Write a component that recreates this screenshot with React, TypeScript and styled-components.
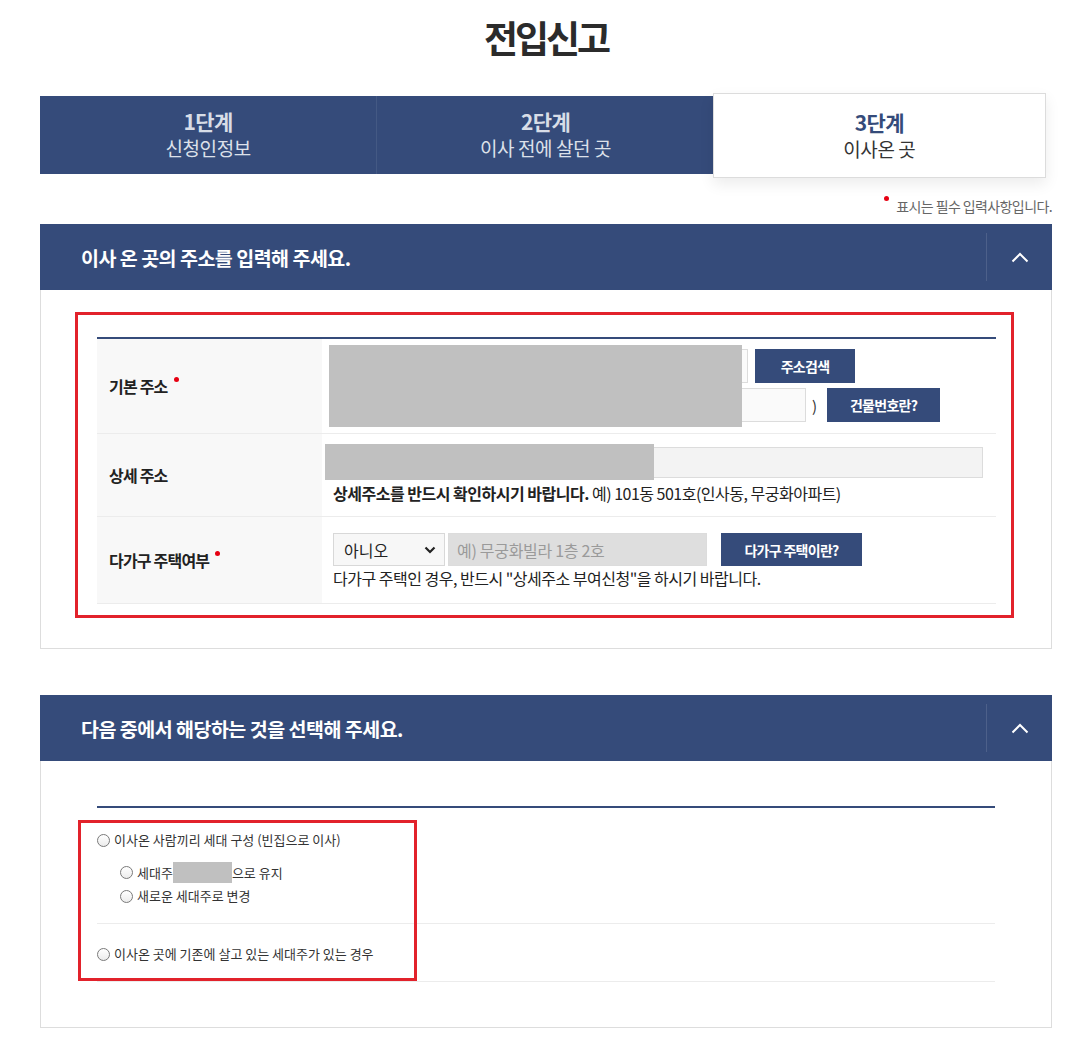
import React from "react";
import styled, { createGlobalStyle, css } from "styled-components";

const NAVY = "#354b7a";
const MARK_RED = "#e2222b";

const GlobalStyle = createGlobalStyle`
  * {
    box-sizing: border-box;
  }

  body {
    margin: 0;
    background: #fff;
    font-family: "Noto Sans CJK KR", "Noto Sans", sans-serif;
    color: #222;
  }
`;

const Page = styled.div`
  width: 1075px;
  padding: 0 23px 14px 40px;
`;

const Title = styled.h1`
  margin: 0 0 36px;
  padding-top: 14px;
  text-align: center;
  font-size: 37px;
  line-height: 46px;
  font-weight: 700;
  letter-spacing: -3px;
  color: #2b2b2b;
`;

const Steps = styled.div`
  display: grid;
  grid-template-columns: repeat(3, 1fr);
  height: 78px;
`;

const Step = styled.div<{ $active?: boolean }>`
  display: flex;
  flex-direction: column;
  align-items: center;
  justify-content: center;
  background: ${NAVY};
  border-right: 1px solid rgba(255, 255, 255, 0.08);

  ${(p) =>
    p.$active &&
    css`
      position: relative;
      z-index: 1;
      margin: -3px 6px -4px -2px;
      background: #fff;
      border: 1px solid #dcdcdc;
      box-shadow: 0 6px 14px rgba(0, 0, 0, 0.08);
    `}
`;

const StepNum = styled.div<{ $active?: boolean }>`
  font-size: 21px;
  line-height: 26px;
  font-weight: 700;
  letter-spacing: -0.6px;
  color: ${(p) => (p.$active ? NAVY : "#d8dde7")};
`;

const StepName = styled.div<{ $active?: boolean }>`
  font-size: 19px;
  line-height: 28px;
  letter-spacing: -0.4px;
  color: ${(p) => (p.$active ? "#333" : "#dde1ea")};
`;

const Note = styled.p`
  margin: 0;
  padding: 22px 0 8px;
  text-align: right;
  font-size: 14px;
  line-height: 20px;
  letter-spacing: -0.6px;
  color: #666;
`;

const NoteDot = styled.span`
  display: inline-block;
  width: 5px;
  height: 5px;
  margin-right: 7px;
  border-radius: 50%;
  background: #e60012;
  vertical-align: top;
`;

const Section = styled.section`
  & + & {
    margin-top: 46px;
  }
`;

const SectionHead = styled.div`
  display: flex;
  align-items: center;
  height: 66px;
  padding-left: 41px;
  background: ${NAVY};
`;

const SectionTitle = styled.h2`
  flex: 1;
  margin: 0;
  font-size: 19.5px;
  font-weight: 700;
  letter-spacing: -0.5px;
  color: #fff;
`;

const Toggle = styled.button`
  display: flex;
  align-items: center;
  justify-content: center;
  width: 66px;
  height: 48px;
  padding: 0;
  border: 0;
  border-left: 1px solid rgba(255, 255, 255, 0.12);
  background: transparent;
`;

const SectionBody = styled.div<{ $pad: string }>`
  border: 1px solid #dddddd;
  border-top: 0;
  padding: ${(p) => p.$pad};
`;

const MarkBox = styled.div`
  border: 3px solid ${MARK_RED};
  padding: 22px 15px 11px 19px;
`;

const FormTable = styled.div`
  border-top: 2px solid ${NAVY};
`;

const FormRow = styled.div`
  display: grid;
  grid-template-columns: 225px 1fr;
  border-bottom: 1px solid #ececec;
`;

const LabelCell = styled.div`
  display: flex;
  align-items: center;
  padding-left: 12px;
  background: #f8f8f8;
  font-size: 16px;
  font-weight: 700;
  letter-spacing: -0.8px;
  color: #222;
`;

const Required = styled.span`
  display: inline-block;
  width: 5px;
  height: 5px;
  margin: 0 0 14px 6px;
  border-radius: 50%;
  background: #e60012;
`;

const ValueCell = styled.div<{ $pad: string }>`
  position: relative;
  padding: ${(p) => p.$pad};
`;

const Line = styled.div<{ $gap?: number; $top?: number }>`
  display: flex;
  align-items: center;
  gap: ${(p) => p.$gap ?? 0}px;
  margin-top: ${(p) => p.$top ?? 0}px;
`;

const TextInput = styled.input<{ $w: number; $h: number; $bg?: string }>`
  width: ${(p) => p.$w}px;
  height: ${(p) => p.$h}px;
  padding: 0 8px;
  border: 1px solid #dcdcdc;
  background: ${(p) => p.$bg ?? "#fafafa"};
  font-family: inherit;
  font-size: 16px;
  letter-spacing: -0.3px;
  color: #222;
  outline: none;

  &::placeholder {
    color: #9a9a9a;
  }
`;

const Paren = styled.span`
  margin: 0 10px 0 6px;
  font-size: 15px;
  color: #333;
`;

const NavyButton = styled.button<{ $w: number; $h: number }>`
  width: ${(p) => p.$w}px;
  height: ${(p) => p.$h}px;
  padding: 0;
  border: 0;
  background: ${NAVY};
  font-family: inherit;
  font-size: 14px;
  font-weight: 700;
  letter-spacing: -0.7px;
  color: #fff;
`;

const FakeSelect = styled.div`
  display: flex;
  align-items: center;
  justify-content: space-between;
  width: 112px;
  height: 33px;
  padding: 0 8px 0 10px;
  border: 1px solid #d8d8d8;
  background: #f7f7f7;
  font-size: 16px;
  color: #222;
`;

const Help = styled.p<{ $top: number }>`
  margin: ${(p) => p.$top}px 0 0;
  font-size: 16px;
  line-height: 22px;
  letter-spacing: -0.5px;
  color: #222;

  strong {
    font-weight: 700;
  }
`;

/* grey blocks masking personal data in the capture */
const Redaction = styled.div<{ $l: number; $t: number; $w: number; $h: number }>`
  position: absolute;
  left: ${(p) => p.$l}px;
  top: ${(p) => p.$t}px;
  width: ${(p) => p.$w}px;
  height: ${(p) => p.$h}px;
  background: #c0c0c0;
`;

const InlineRedaction = styled.span`
  display: inline-block;
  width: 59px;
  height: 21px;
  background: #c0c0c0;
  vertical-align: middle;
`;

const OptionList = styled.div`
  position: relative;
  border-top: 2px solid ${NAVY};
`;

const OptionGroup = styled.div<{ $pad: string }>`
  padding: ${(p) => p.$pad};
  border-bottom: 1px solid #ececec;
`;

const SubOptions = styled.div`
  display: flex;
  flex-direction: column;
  gap: 3px;
  margin-top: 12px;
  padding-left: 23px;
`;

const Option = styled.label`
  display: flex;
  align-items: center;
  font-size: 13px;
  line-height: 20px;
  letter-spacing: 0;
  color: #333;
`;

const Radio = styled.input.attrs({ type: "radio" })`
  appearance: none;
  width: 13px;
  height: 13px;
  margin: 0 4px 0 0;
  border: 1px solid #7a7a7a;
  border-radius: 50%;
  background: linear-gradient(#ffffff, #ececec);
`;

const OverlayMark = styled.div`
  position: absolute;
  left: -19px;
  top: 12px;
  width: 339px;
  height: 161px;
  border: 3px solid ${MARK_RED};
  pointer-events: none;
`;

function ChevronUp(): JSX.Element {
  return (
    <svg width="18" height="11" viewBox="0 0 18 11" fill="none">
      <polyline points="1.5,9.5 9,2 16.5,9.5" stroke="#fff" strokeWidth="2" />
    </svg>
  );
}

function ChevronDown(): JSX.Element {
  return (
    <svg width="12" height="8" viewBox="0 0 12 8" fill="none">
      <polyline points="1.5,1.5 6,6 10.5,1.5" stroke="#222" strokeWidth="2.2" />
    </svg>
  );
}

const steps = [
  { num: "1단계", name: "신청인정보" },
  { num: "2단계", name: "이사 전에 살던 곳" },
  { num: "3단계", name: "이사온 곳", active: true },
];

function App(): JSX.Element {
  return (
    <Page>
      <GlobalStyle />
      <Title>전입신고</Title>

      <Steps>
        {steps.map((s) => (
          <Step key={s.num} $active={s.active}>
            <StepNum $active={s.active}>{s.num}</StepNum>
            <StepName $active={s.active}>{s.name}</StepName>
          </Step>
        ))}
      </Steps>

      <Note>
        <NoteDot />
        표시는 필수 입력사항입니다.
      </Note>

      <Section>
        <SectionHead>
          <SectionTitle>이사 온 곳의 주소를 입력해 주세요.</SectionTitle>
          <Toggle aria-label="접기">
            <ChevronUp />
          </Toggle>
        </SectionHead>
        <SectionBody $pad="22px 37px 30px 34px">
          <MarkBox>
            <FormTable>
              <FormRow>
                <LabelCell>
                  기본 주소
                  <Required />
                </LabelCell>
                <ValueCell $pad="10px 0 11px 11px">
                  <Line $gap={7}>
                    <TextInput $w={415} $h={34} readOnly />
                    <NavyButton $w={100} $h={34}>주소검색</NavyButton>
                  </Line>
                  <Line $top={5}>
                    <TextInput $w={473} $h={34} readOnly />
                    <Paren>)</Paren>
                    <NavyButton $w={113} $h={34}>건물번호란?</NavyButton>
                  </Line>
                  <Redaction $l={7} $t={6} $w={413} $h={82} />
                </ValueCell>
              </FormRow>

              <FormRow>
                <LabelCell>상세 주소</LabelCell>
                <ValueCell $pad="13px 0 12px 11px">
                  <TextInput $w={650} $h={31} $bg="#f3f3f3" readOnly />
                  <Help $top={4}>
                    <strong>상세주소를 반드시 확인하시기 바랍니다.</strong> 예) 101동
                    501호(인사동, 무궁화아파트)
                  </Help>
                  <Redaction $l={3} $t={10} $w={329} $h={36} />
                </ValueCell>
              </FormRow>

              <FormRow>
                <LabelCell>
                  다가구 주택여부
                  <Required />
                </LabelCell>
                <ValueCell $pad="16px 0 14px 11px">
                  <Line>
                    <FakeSelect>
                      아니오
                      <ChevronDown />
                    </FakeSelect>
                    <TextInput
                      $w={259}
                      $h={33}
                      $bg="#dedede"
                      style={{ marginLeft: 3, marginRight: 14 }}
                      placeholder="예) 무궁화빌라 1층 2호"
                      readOnly
                    />
                    <NavyButton $w={141} $h={33}>다가구 주택이란?</NavyButton>
                  </Line>
                  <Help $top={1}>
                    다가구 주택인 경우, 반드시 "상세주소 부여신청"을 하시기 바랍니다.
                  </Help>
                </ValueCell>
              </FormRow>
            </FormTable>
          </MarkBox>
        </SectionBody>
      </Section>

      <Section>
        <SectionHead>
          <SectionTitle>다음 중에서 해당하는 것을 선택해 주세요.</SectionTitle>
          <Toggle aria-label="접기">
            <ChevronUp />
          </Toggle>
        </SectionHead>
        <SectionBody $pad="45px 56px 45px 56px">
          <OptionList>
            <OptionGroup $pad="22px 0 17px">
              <Option>
                <Radio name="type" />
                이사온 사람끼리 세대 구성 (빈집으로 이사)
              </Option>
              <SubOptions>
                <Option>
                  <Radio name="head" />
                  세대주
                  <InlineRedaction />
                  으로 유지
                </Option>
                <Option>
                  <Radio name="head" />
                  새로운 세대주로 변경
                </Option>
              </SubOptions>
            </OptionGroup>
            <OptionGroup $pad="20px 0 17px">
              <Option>
                <Radio name="type" />
                이사온 곳에 기존에 살고 있는 세대주가 있는 경우
              </Option>
            </OptionGroup>
            <OverlayMark />
          </OptionList>
        </SectionBody>
      </Section>
    </Page>
  );
}

export default App;
